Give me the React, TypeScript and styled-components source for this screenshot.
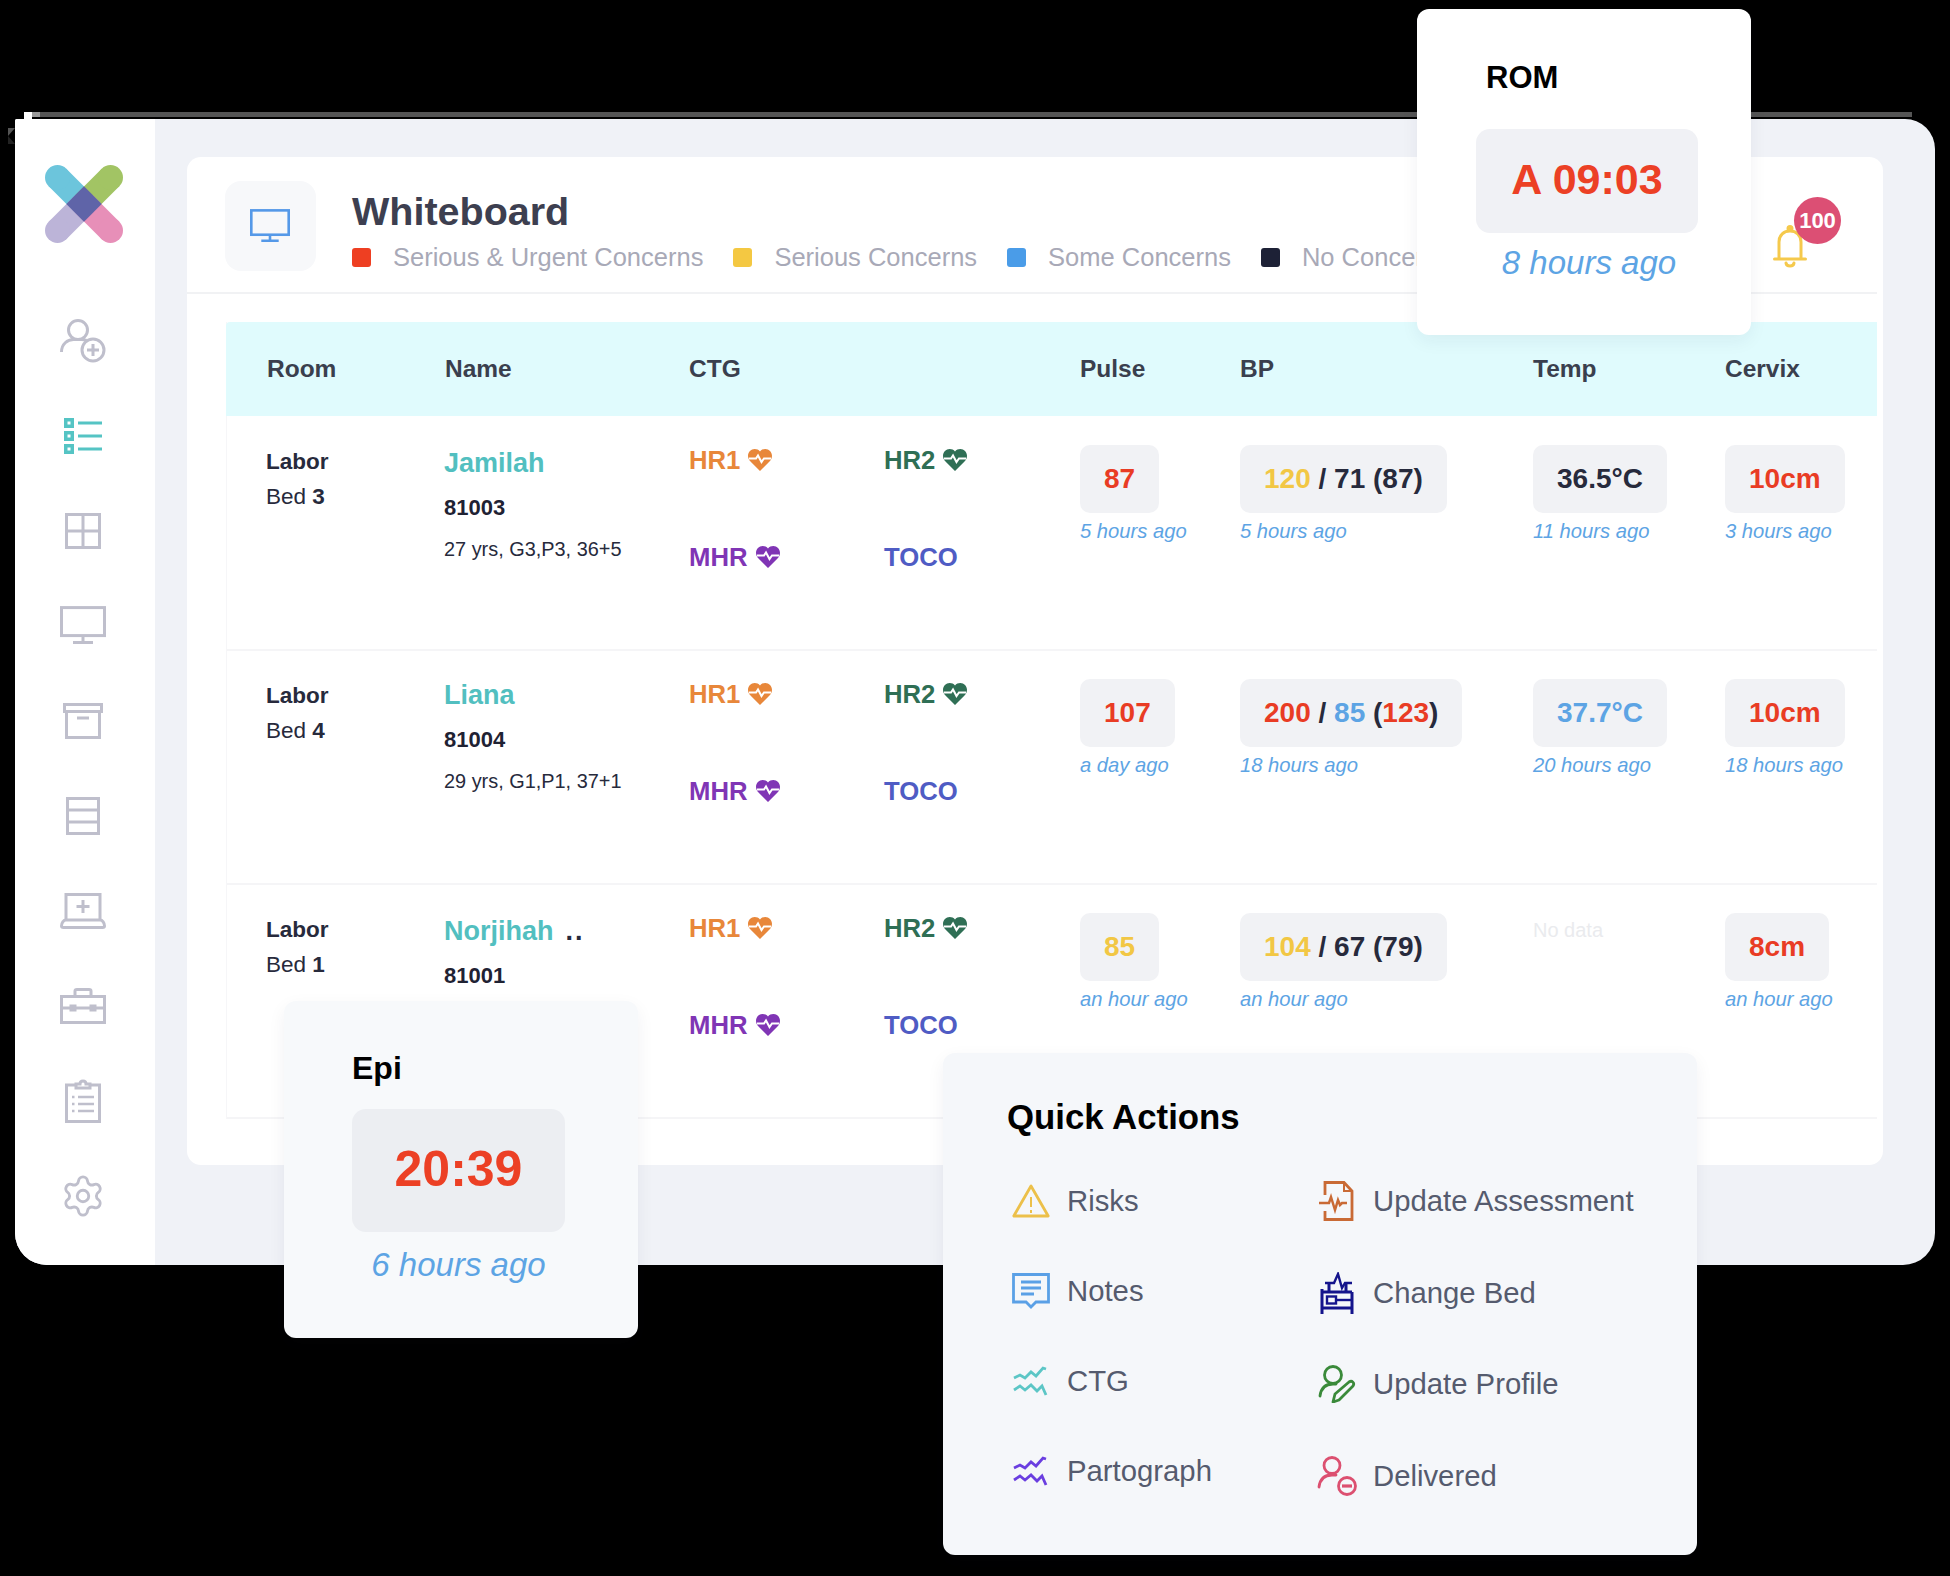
import React from "react";
import styled, { createGlobalStyle } from "styled-components";
import { Settings } from "lucide-react";

const Global = createGlobalStyle`
  html, body { margin: 0; padding: 0; background: #000; }
  body { font-family: "Liberation Sans", Arial, sans-serif; }
`;

const Page = styled.div`
  position: relative;
  width: 1950px;
  height: 1576px;
  padding-top: 112px;
  box-sizing: border-box;
  overflow: hidden;
  background: #000;
`;
const TopEdge = styled.div`
  height: 5px;
  margin: 0 38px 2px 40px;
  background: #555;
`;
const EdgeTick = styled.div`
  position: absolute;
  left: 24px;
  top: 112px;
  width: 8px;
  height: 7px;
  background: #fff;
  &::after {
    content: "";
    position: absolute;
    left: 8px;
    top: 0;
    width: 8px;
    height: 5px;
    background: #999;
  }
`;
const EdgeWedge = styled.div`
  position: absolute;
  left: 8px;
  top: 128px;
  width: 0;
  height: 0;
  border-top: 8px solid #555;
  border-right: 7px solid transparent;
  border-bottom: 8px solid #222;
`;
const Windowed = styled.div`
  display: flex;
  height: 1146px;
  margin: 0 15px;
  border-radius: 2px 30px 32px 32px;
  overflow: hidden;
  background: #f0f2f7;
`;
const Sidebar = styled.aside`
  width: 140px;
  flex: none;
  padding: 46px 5px 0 0;
  background: #fff;
  display: flex;
  flex-direction: column;
  align-items: center;
  box-sizing: border-box;
`;
const LogoWrap = styled.div`
  margin-left: 2px;
  height: 78px;
`;
const Nav = styled.nav`
  margin-top: 50px;
  display: flex;
  flex-direction: column;
`;
const NavItem = styled.div<{ $active?: boolean }>`
  height: 95px;
  width: 46px;
  display: flex;
  align-items: center;
  justify-content: center;
  color: ${(p) => (p.$active ? "#55c4c4" : "#bfbfcc")};
`;
const Main = styled.main`
  flex: 1;
  padding: 38px 52px 100px 32px;
  min-width: 0;
`;
const Card = styled.section`
  height: 1008px;
  background: #fff;
  border-radius: 14px;
  box-sizing: border-box;
`;
const CardHeader = styled.header`
  height: 137px;
  margin-right: 6px;
  padding: 24px 38px 0;
  box-sizing: border-box;
  display: flex;
  align-items: flex-start;
  border-bottom: 2px solid #f1f2f4;
`;
const Tile = styled.div`
  width: 91px;
  height: 90px;
  flex: none;
  border-radius: 16px;
  background: #f7f8fa;
  color: #5599e8;
  display: flex;
  align-items: center;
  justify-content: center;
  padding-right: 2px;
  box-sizing: border-box;
`;
const TitleBlock = styled.div`
  margin-left: 36px;
  flex: 1;
  min-width: 0;
`;
const Title = styled.h1`
  margin: 8px 0 0;
  font-size: 39.5px;
  line-height: 44px;
  font-weight: 700;
  color: #3d3f50;
`;
const Legend = styled.div`
  display: flex;
  align-items: center;
  margin-top: 7px;
  height: 34px;
  white-space: nowrap;
`;
const LegendSwatch = styled.span<{ $c: string }>`
  width: 19px;
  height: 19px;
  border-radius: 3px;
  background: ${(p) => p.$c};
  margin-right: 22px;
`;
const LegendText = styled.span`
  font-size: 25.5px;
  color: #a8a9b7;
  margin-right: 30px;
`;
const BellWrap = styled.div`
  position: relative;
  flex: none;
  width: 34px;
  height: 44px;
  margin: 44px 32px 0 0;
  color: #f5c94c;
`;
const Badge = styled.span`
  position: absolute;
  left: 21px;
  top: -28px;
  width: 47px;
  height: 47px;
  border-radius: 50%;
  background: #dc4f74;
  color: #fff;
  font-size: 22px;
  font-weight: 700;
  display: flex;
  align-items: center;
  justify-content: center;
`;
const Table = styled.div`
  margin: 28px 6px 0 39px;
  border-left: 1px solid #f6f6f8;
`;
const colTail = "178px 244px 195px 196px 160px 293px 192px 1fr";
const HeadRow = styled.div`
  display: grid;
  grid-template-columns: 41px ${colTail};
  height: 94px;
  align-items: center;
  background: #e0fbfd;
  margin-left: -1px;
  border-radius: 4px 0 0 0;
`;
const HeadCell = styled.div<{ $col: number }>`
  grid-column: ${(p) => p.$col};
  font-size: 24.5px;
  font-weight: 700;
  color: #3a3f4e;
`;
const Row = styled.div`
  display: grid;
  grid-template-columns: 40px ${colTail};
  height: 235px;
  box-sizing: border-box;
  border-bottom: 2px solid #f5f5f7;
  & + & {
    margin-top: -1px;
  }
`;
const RoomCell = styled.div`
  grid-column: 2;
  margin-left: -1px;
  padding-top: 28px;
  font-size: 22.5px;
  line-height: 35px;
  color: #272a3c;
`;
const Strong = styled.div`
  font-weight: 700;
`;
const NameCell = styled.div`
  grid-column: 3;
  margin-left: -1px;
  padding-top: 30px;
`;
const NameLine = styled.div<{ $lift?: number }>`
  display: flex;
  align-items: baseline;
  height: 34px;
  line-height: 34px;
  margin-top: ${(p) => -(p.$lift ?? 0)}px;
  margin-bottom: ${(p) => p.$lift ?? 0}px;
  font-size: 27px;
  font-weight: 700;
  color: #52bfc0;
`;
const More = styled.span`
  margin-left: 12px;
  color: #272a3c;
  letter-spacing: 2px;
`;
const Mrn = styled.div`
  margin-top: 11px;
  height: 34px;
  line-height: 34px;
  font-size: 22px;
  font-weight: 700;
  color: #1f2233;
`;
const Info = styled.div`
  margin-top: 7px;
  height: 34px;
  line-height: 34px;
  font-size: 19.9px;
  color: #272a3c;
`;
const CtgCell = styled.div`
  grid-column: 4 / span 2;
  padding-top: 27px;
  display: grid;
  grid-template-columns: 195px 196px;
  grid-auto-rows: 34px;
  row-gap: 63px;
`;
const Signal = styled.div<{ $c: string }>`
  display: flex;
  align-items: center;
  gap: 8px;
  font-size: 25.7px;
  font-weight: 700;
  line-height: 34px;
  color: ${(p) => p.$c};
`;
const ValueCell = styled.div`
  padding-top: 29px;
`;
const ValueBox = styled.div`
  display: inline-flex;
  align-items: center;
  height: 68px;
  padding: 0 24px;
  border-radius: 10px;
  background: #f1f2f5;
  font-size: 28px;
  font-weight: 700;
  color: #272a3c;
  white-space: pre;
`;
const Tone = styled.span<{ $c?: string }>`
  color: ${(p) => p.$c ?? "inherit"};
`;
const Ago = styled.div`
  margin-top: 6px;
  font-size: 20.2px;
  line-height: 24px;
  font-style: italic;
  color: #5da4e4;
  white-space: nowrap;
`;
const NoData = styled.div`
  padding-top: 5px;
  font-size: 20px;
  line-height: 24px;
  color: #eaebee;
`;
const Pop = styled.div<{ $bg: string }>`
  position: absolute;
  box-sizing: border-box;
  border-radius: 12px;
  background: ${(p) => p.$bg};
  box-shadow: 0 6px 18px rgba(30, 40, 70, 0.06);
`;
const RomPop = styled(Pop)`
  left: 1417px;
  top: 9px;
  width: 334px;
  height: 326px;
  padding: 47px 59px 0 69px;
`;
const EpiPop = styled(Pop)`
  left: 284px;
  top: 1001px;
  width: 354px;
  height: 337px;
  padding: 45px 73px 0 68px;
`;
const PopTitle = styled.div<{ $size: number }>`
  font-size: ${(p) => p.$size}px;
  line-height: 44px;
  font-weight: 700;
  color: #000;
`;
const RomBox = styled.div`
  margin: 29px 0 0 -10px;
  padding-bottom: 4px;
  box-sizing: border-box;
  width: 222px;
  height: 104px;
  border-radius: 14px;
  background: #f0f1f5;
  display: flex;
  align-items: center;
  justify-content: center;
  font-size: 43px;
  font-weight: 700;
  color: #ec4025;
`;
const EpiBox = styled.div`
  margin-top: 19px;
  padding-bottom: 3px;
  box-sizing: border-box;
  width: 213px;
  height: 123px;
  border-radius: 14px;
  background: #eceef2;
  display: flex;
  align-items: center;
  justify-content: center;
  font-size: 50px;
  font-weight: 700;
  color: #ec4025;
`;
const PopAgo = styled.div<{ $gap: number }>`
  margin-top: ${(p) => p.$gap}px;
  font-size: 33px;
  line-height: 40px;
  font-style: italic;
  color: #5da4e4;
  text-align: center;
  white-space: nowrap;
`;
const ActionsPop = styled(Pop)`
  left: 943px;
  top: 1053px;
  width: 754px;
  height: 502px;
  padding: 42px 0 0 64px;
`;
const ActionsTitle = styled.div`
  font-size: 34.8px;
  line-height: 44px;
  font-weight: 700;
  color: #000;
`;
const ActionColumns = styled.div`
  display: flex;
  margin-top: 39px;
`;
const ActionColumn = styled.div<{ $step: number }>`
  width: 306px;
  display: grid;
  grid-auto-rows: ${(p) => p.$step}px;
  margin-left: 4px;
  & + & {
    margin-left: 0;
  }
`;
const Action = styled.div`
  display: flex;
  align-items: center;
  height: 46px;
  gap: 16px;
  font-size: 29.3px;
  color: #555b6e;
  white-space: nowrap;
`;
const ActionIcon = styled.span`
  width: 40px;
  height: 46px;
  flex: none;
  display: flex;
  align-items: center;
  justify-content: center;
`;

const Svg = ({ w, h, sw = 3, children }: { w: number; h: number; sw?: number; children: React.ReactNode }) => (
  <svg width={w} height={h} viewBox={`0 0 ${w} ${h}`} fill="none" stroke="currentColor" strokeWidth={sw}>
    {children}
  </svg>
);

const Logo = () => (
  <svg width="78" height="78" viewBox="0 0 78 78">
    <g strokeWidth="25">
      <line x1="39" y1="39" x2="12.5" y2="12.5" stroke="#6cc5dc" />
      <line x1="39" y1="39" x2="65.5" y2="12.5" stroke="#a2c464" />
      <line x1="39" y1="39" x2="12.5" y2="65.5" stroke="#bcb4d8" />
      <line x1="39" y1="39" x2="65.5" y2="65.5" stroke="#e78fb8" />
    </g>
    <circle cx="12.5" cy="12.5" r="12.5" fill="#6cc5dc" />
    <circle cx="65.5" cy="12.5" r="12.5" fill="#a2c464" />
    <circle cx="12.5" cy="65.5" r="12.5" fill="#bcb4d8" />
    <circle cx="65.5" cy="65.5" r="12.5" fill="#e78fb8" />
    <polygon points="21.3,39 39,21.3 56.7,39 39,56.7" fill="#5f64a8" />
  </svg>
);

const IconAddUser = () => (
  <Svg w={46} h={44}>
    <circle cx="18" cy="11" r="9.5" />
    <path d="M1.500 33c0-8 6-12.500 12-12.500h8c2 0 3.500.4 5 1" />
    <circle cx="33" cy="31" r="11" />
    <path d="M33 25v12M27 31h12" />
  </Svg>
);
const IconList = () => (
  <svg width="38" height="36" viewBox="0 0 38 36" fill="none" stroke="currentColor">
    <rect x="1.750" y="1.750" width="6.500" height="6.500" strokeWidth="3.500" />
    <rect x="1.750" y="14.750" width="6.500" height="6.500" strokeWidth="3.500" />
    <rect x="1.750" y="27.750" width="6.500" height="6.500" strokeWidth="3.500" />
    <path d="M14 5h24M14 18h24M14 31h24" strokeWidth="3" />
  </svg>
);
const IconGrid = () => (
  <Svg w={36} h={36}>
    <rect x="1.500" y="1.500" width="33" height="33" />
    <path d="M18 1.500v33M1.500 18h33" />
  </Svg>
);
const IconMonitor = ({ size = 46, sw = 3 }: { size?: number; sw?: number }) => (
  <svg width={size} height={size * 0.83} viewBox="0 0 46 38" fill="none" stroke="currentColor" strokeWidth={sw}>
    <rect x="1.500" y="1.500" width="43" height="28" />
    <path d="M23 30v6M13 36.500h20" />
  </svg>
);
const IconArchive = () => (
  <Svg w={40} h={36}>
    <rect x="1.500" y="1.500" width="37" height="7" />
    <path d="M3.500 8.500v26h33v-26M14 15h12" />
  </Svg>
);
const IconStack = () => (
  <Svg w={34} h={38}>
    <rect x="1.500" y="1.500" width="31" height="35" />
    <path d="M1.500 13h31M1.500 25h31" />
  </Svg>
);
const IconLaptop = () => (
  <Svg w={46} h={36}>
    <path d="M6 26V1.500h34V26" />
    <path d="M1.500 33c0-3 2-6 4.500-6h34c2.500 0 4.500 3 4.500 6 0 1-1 1.500-2 1.500H3.500c-1 0-2-.5-2-1.500Z" />
    <path d="M23 7v13M16.500 13.500h13" />
  </Svg>
);
const IconToolbox = () => (
  <Svg w={46} h={36}>
    <rect x="1.500" y="8.500" width="43" height="26" />
    <path d="M15 8V3c0-1 1-1.500 2-1.500h12c1 0 2 .5 2 1.500v5" />
    <path d="M1.500 20h43" />
    <rect x="11" y="18" width="4" height="4" fill="currentColor" />
    <rect x="31" y="18" width="4" height="4" fill="currentColor" />
  </Svg>
);
const IconClipboard = () => (
  <Svg w={36} h={44}>
    <path d="M11 6H1.500v36.500h33V6H25" />
    <path d="M11 9V5h4c0-4 6-4 6 0h4v4Z" />
    <path d="M13 18h16M13 25h16M13 32h16" strokeWidth="2.400" />
    <path d="M7 18h2.500M7 25h2.500M7 32h2.500" strokeWidth="2.400" />
  </Svg>
);

const IconBell = () => (
  <svg width="34" height="44" viewBox="0 0 34 44" fill="none" stroke="currentColor" strokeWidth="3" strokeLinecap="round">
    <path d="M6 33V17C6 10 11 6 17 6s11 4 11 11v16" />
    <path d="M1.500 34h31" />
    <path d="M13 38c.5 4 7.500 4 8 0" />
    <circle cx="17" cy="3.500" r="2" fill="currentColor" />
  </svg>
);
const Heart = () => (
  <svg width="24" height="22" viewBox="0 0 24 22">
    <path
      fill="currentColor"
      d="M12 22 2.500 12.500C.8 10.800 0 9 0 6.800 0 3 3 0 6.700 0 8.800 0 10.600.8 12 2.400 13.400.8 15.200 0 17.300 0 21 0 24 3 24 6.800c0 2.200-.8 4-2.500 5.700Z"
    />
    <path d="M1 9.500h7l2-3 3.500 6.500 2.500-3.500h7" fill="none" stroke="#fff" strokeWidth="2" />
  </svg>
);

const QIcon = ({ c, w, h, children }: { c: string; w: number; h: number; children: React.ReactNode }) => (
  <svg width={w} height={h} viewBox={`0 0 ${w} ${h}`} fill="none" stroke={c} strokeWidth="2.800">
    {children}
  </svg>
);
const Risks = () => (
  <QIcon c="#ecc04a" w={38} h={34}>
    <path d="M19 2 1.800 32h34.400Z" strokeLinejoin="round" />
    <path d="M19 13v10M19 26v3" strokeWidth="2" />
  </QIcon>
);
const Assessment = () => (
  <QIcon c="#c96a35" w={36} h={40}>
    <path d="M6 14V1.500h19l8 8.500v28.500H6V30" />
    <path d="M25 1.500V10h8" strokeWidth="2" />
    <path d="M0 22h10l2-6 4 13 3-10 2 5 2-2h5" strokeWidth="2.500" />
  </QIcon>
);
const Notes = () => (
  <QIcon c="#5aa0e6" w={38} h={36}>
    <path d="M1.500 1.500h35V29H24l-5 5-5-5H1.500Z" />
    <path d="M9 9h20M9 15h20M9 21h13" />
  </QIcon>
);
const ChangeBed = () => (
  <QIcon c="#14148c" w={34} h={42}>
    <path d="M5 11h9l4-9 4 14 3-5h7" strokeWidth="2.400" />
    <path d="M2 17v25M32 20v22M2 20h30M2 36h30M9 11v9M26 11v9" strokeWidth="3" />
    <rect x="7" y="24.500" width="9" height="7" strokeWidth="2.400" />
    <path d="M16 28h16" strokeWidth="2.400" />
  </QIcon>
);
const Waves = ({ c }: { c: string }) => (
  <QIcon c={c} w={36} h={32}>
    <path d="M1 13l6-3 5 3 6-6 5 4 7-8 3 1" />
    <path d="M1 25l6-4 5 4 6-5 6 6 5-5 4 9" />
  </QIcon>
);
const Profile = () => (
  <QIcon c="#3a8a3a" w={38} h={38}>
    <circle cx="15" cy="10" r="8.500" />
    <path d="M2 31c1-8 6-12 13-12h3" strokeLinecap="round" />
    <path d="M15 37l2-8L31 17c3-2 6 1 4 4L21 35Z" strokeLinejoin="round" />
  </QIcon>
);
const Delivered = () => (
  <QIcon c="#dc5070" w={40} h={40}>
    <circle cx="15" cy="9.500" r="8" />
    <path d="M2 31c1-8 6-12 13-12h4" strokeLinecap="round" />
    <circle cx="30" cy="30" r="8.500" />
    <path d="M25 30h10" strokeWidth="3.200" />
  </QIcon>
);

type V = { label: React.ReactNode; ago?: string; nodata?: boolean };
const R = "#e93c24";
const Y = "#f2c744";
const B = "#5da4e4";

const rows: {
  bed: string;
  name: string;
  lift?: number;
  more?: boolean;
  id: string;
  info?: string;
  pulse: V;
  bp: V;
  temp: V;
  cervix: V;
}[] = [
  {
    bed: "3",
    name: "Jamilah",
    id: "81003",
    info: "27 yrs, G3,P3, 36+5",
    pulse: { label: <Tone $c={R}>87</Tone>, ago: "5 hours ago" },
    bp: { label: <><Tone $c={Y}>120</Tone> / 71 (87)</>, ago: "5 hours ago" },
    temp: { label: "36.5°C", ago: "11 hours ago" },
    cervix: { label: <Tone $c={R}>10cm</Tone>, ago: "3 hours ago" },
  },
  {
    bed: "4",
    name: "Liana",
    lift: 2,
    id: "81004",
    info: "29 yrs, G1,P1, 37+1",
    pulse: { label: <Tone $c={R}>107</Tone>, ago: "a day ago" },
    bp: {
      label: <><Tone $c={R}>200</Tone> / <Tone $c={B}>85</Tone> (<Tone $c={R}>123</Tone>)</>,
      ago: "18 hours ago",
    },
    temp: { label: <Tone $c={B}>37.7°C</Tone>, ago: "20 hours ago" },
    cervix: { label: <Tone $c={R}>10cm</Tone>, ago: "18 hours ago" },
  },
  {
    bed: "1",
    name: "Norjihah",
    more: true,
    id: "81001",
    pulse: { label: <Tone $c={Y}>85</Tone>, ago: "an hour ago" },
    bp: { label: <><Tone $c={Y}>104</Tone> / 67 (79)</>, ago: "an hour ago" },
    temp: { label: "", nodata: true },
    cervix: { label: <Tone $c={R}>8cm</Tone>, ago: "an hour ago" },
  },
];

const Value = ({ v }: { v: V }) => (
  <ValueCell>
    {v.nodata ? (
      <NoData>No data</NoData>
    ) : (
      <>
        <ValueBox>{v.label}</ValueBox>
        <Ago>{v.ago}</Ago>
      </>
    )}
  </ValueCell>
);

const legend = [
  ["#ee3f22", "Serious & Urgent Concerns"],
  ["#f4c842", "Serious Concerns"],
  ["#4a9ce8", "Some Concerns"],
  ["#1d2136", "No Concerns"],
];
const heads: [string, number][] = [
  ["Room", 2],
  ["Name", 3],
  ["CTG", 4],
  ["Pulse", 6],
  ["BP", 7],
  ["Temp", 8],
  ["Cervix", 9],
];

export default function App() {
  return (
    <Page>
      <Global />
      <EdgeTick />
      <EdgeWedge />
      <TopEdge />
      <Windowed>
        <Sidebar>
          <LogoWrap><Logo /></LogoWrap>
          <Nav>
            <NavItem><IconAddUser /></NavItem>
            <NavItem $active><IconList /></NavItem>
            <NavItem><IconGrid /></NavItem>
            <NavItem><IconMonitor /></NavItem>
            <NavItem><IconArchive /></NavItem>
            <NavItem><IconStack /></NavItem>
            <NavItem><IconLaptop /></NavItem>
            <NavItem><IconToolbox /></NavItem>
            <NavItem><IconClipboard /></NavItem>
            <NavItem><Settings size={50} strokeWidth={1.500} /></NavItem>
          </Nav>
        </Sidebar>
        <Main>
          <Card>
            <CardHeader>
              <Tile><IconMonitor size={40} sw={3} /></Tile>
              <TitleBlock>
                <Title>Whiteboard</Title>
                <Legend>
                  {legend.map(([c, t]) => (
                    <React.Fragment key={t}>
                      <LegendSwatch $c={c} />
                      <LegendText>{t}</LegendText>
                    </React.Fragment>
                  ))}
                </Legend>
              </TitleBlock>
              <BellWrap>
                <IconBell />
                <Badge>100</Badge>
              </BellWrap>
            </CardHeader>
            <Table>
              <HeadRow>
                {heads.map(([t, col]) => (
                  <HeadCell key={t} $col={col}>{t}</HeadCell>
                ))}
              </HeadRow>
              {rows.map((r) => (
                <Row key={r.id}>
                  <RoomCell>
                    <Strong>Labor</Strong>
                    Bed <b>{r.bed}</b>
                  </RoomCell>
                  <NameCell>
                    <NameLine $lift={r.lift}>
                      {r.name}
                      {r.more && <More>..</More>}
                    </NameLine>
                    <Mrn>{r.id}</Mrn>
                    {r.info && <Info>{r.info}</Info>}
                  </NameCell>
                  <CtgCell>
                    <Signal $c="#e8873a">HR1 <Heart /></Signal>
                    <Signal $c="#2f6f55">HR2 <Heart /></Signal>
                    <Signal $c="#8035b5">MHR <Heart /></Signal>
                    <Signal $c="#4f5cc4">TOCO</Signal>
                  </CtgCell>
                  <Value v={r.pulse} />
                  <Value v={r.bp} />
                  <Value v={r.temp} />
                  <Value v={r.cervix} />
                </Row>
              ))}
            </Table>
          </Card>
        </Main>
      </Windowed>

      <RomPop $bg="#fff">
        <PopTitle $size={31}>ROM</PopTitle>
        <RomBox>A 09:03</RomBox>
        <PopAgo $gap={10}>8 hours ago</PopAgo>
      </RomPop>

      <EpiPop $bg="#f7f9fb">
        <PopTitle $size={32}>Epi</PopTitle>
        <EpiBox>20:39</EpiBox>
        <PopAgo $gap={13}>6 hours ago</PopAgo>
      </EpiPop>

      <ActionsPop $bg="#f5f7fa">
        <ActionsTitle>Quick Actions</ActionsTitle>
        <ActionColumns>
          <ActionColumn $step={90}>
            <Action><ActionIcon><Risks /></ActionIcon>Risks</Action>
            <Action><ActionIcon><Notes /></ActionIcon>Notes</Action>
            <Action><ActionIcon><Waves c="#5cc6c6" /></ActionIcon>CTG</Action>
            <Action><ActionIcon><Waves c="#6a3ee0" /></ActionIcon>Partograph</Action>
          </ActionColumn>
          <ActionColumn $step={91.700}>
            <Action><ActionIcon><Assessment /></ActionIcon>Update Assessment</Action>
            <Action><ActionIcon><ChangeBed /></ActionIcon>Change Bed</Action>
            <Action><ActionIcon><Profile /></ActionIcon>Update Profile</Action>
            <Action><ActionIcon><Delivered /></ActionIcon>Delivered</Action>
          </ActionColumn>
        </ActionColumns>
      </ActionsPop>
    </Page>
  );
}
